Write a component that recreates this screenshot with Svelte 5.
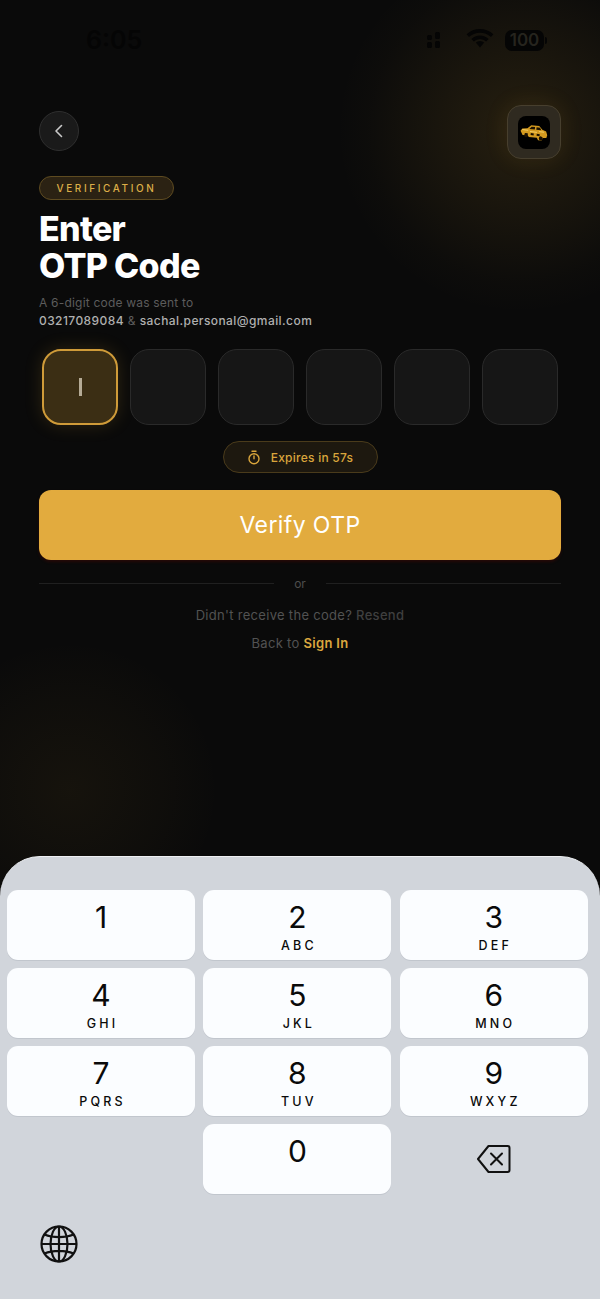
<script>
  const keys = [
    ['1', ''], ['2', 'ABC'], ['3', 'DEF'],
    ['4', 'GHI'], ['5', 'JKL'], ['6', 'MNO'],
    ['7', 'PQRS'], ['8', 'TUV'], ['9', 'WXYZ']
  ];
  const cells = [0, 1, 2, 3, 4, 5];
</script>

<div class="page">
  <div class="glow top"></div>
  <div class="glow bottom"></div>

  <main class="content">
    <div class="status">
      <span class="time">6:05</span>
      <div class="status-icons">
        <svg class="grid-ic" width="14" height="18" viewBox="0 0 14 18"><rect x="0" y="4" width="5" height="5" rx="1.5"/><rect x="8" y="1" width="5" height="7" rx="1.5"/><rect x="0" y="11" width="5" height="6" rx="1.5"/><rect x="8" y="10" width="5" height="7" rx="1.5"/></svg>
        <svg class="wifi" width="28" height="20" viewBox="0 0 28 20"><path d="M14 19.5 9.8 14.6a6 6 0 0 1 8.4 0Z"/><path d="M14 7.4c3.4 0 6.4 1.3 8.6 3.5l-2.4 2.7A8.9 8.9 0 0 0 14 11a8.9 8.9 0 0 0-6.2 2.6l-2.4-2.7A12.2 12.2 0 0 1 14 7.4Z"/><path d="M14 1c5.2 0 9.9 2 13.4 5.3l-2.4 2.7A16.2 16.2 0 0 0 14 4.7C9.800 4.700 5.900 6.300 3 9L.6 6.300A19.400 19.400 0 0 1 14 1Z"/></svg>
        <div class="battery"><span>100</span></div>
        <i class="nub"></i>
      </div>
    </div>

    <header class="top-row">
      <button class="back" aria-label="Back">
        <svg width="12" height="16" viewBox="0 0 12 16" fill="none" stroke="#c9c9c9" stroke-width="1.600" stroke-linecap="round" stroke-linejoin="round"><path d="M8.500 2.500 3 8l5.500 5.500"/></svg>
      </button>
      <div class="logo-box">
        <div class="logo">
          <svg class="car" width="30" height="18" viewBox="0 0 30 18">
            <path d="M1.500 9.500 3 7l5-1 3.500-3.300 8-.3 3.500 3.300 4 1.300 1.500 3.500-.5 3-3.500 .5-1 2.500-3.500.3-1.500-2.500-8 .2-1.500-1.500-5 .3Z" fill="#d39a1f"/>
            <path d="M12 4h3.500v2.500H10Zm5 0h3.500l1.500 2.500h-5ZM6 11h3v2H6Zm6-.5h3v2h-3Zm6 0h3v2h-3Z" fill="#1a1000"/>
            <circle cx="7.500" cy="13.500" r="1.800" fill="#1a1000"/><circle cx="22.500" cy="14.500" r="2" fill="#1a1000"/>
            <path d="M3 8h6M20 8h5M11 9h7" stroke="#f3d06a" stroke-width=".9"/>
          </svg>
        </div>
      </div>
    </header>

    <span class="badge">VERIFICATION</span>

    <h1>Enter<br />OTP Code</h1>

    <p class="sub">A 6-digit code was sent to</p>
    <p class="dest"><b>03217089084</b> <span>&amp;</span> <b>sachal.personal@gmail.com</b></p>

    <div class="otp">
      {#each cells as c}
        <div class="cell" class:active={c === 0}>
          {#if c === 0}<i class="caret"></i>{/if}
        </div>
      {/each}
    </div>

    <div class="timer-row">
      <div class="timer">
        <svg width="14" height="15" viewBox="0 0 14 15" fill="none" stroke="#d9a53c" stroke-width="1.400" stroke-linecap="round"><circle cx="7" cy="8.700" r="5"/><path d="M5 1.200h4M7 6v2.800"/></svg>
        <span>Expires in 57s</span>
      </div>
    </div>

    <button class="verify">Verify OTP</button>

    <div class="divider"><i></i><span>or</span><i></i></div>

    <p class="resend">Didn't receive the code? <span>Resend</span></p>
    <p class="signin">Back to <a href="#top">Sign In</a></p>
  </main>

  <section class="keyboard">
    <div class="keys">
      {#each keys as [d, l]}
        <div class="key">
          <span class="digit">{d}</span>
          {#if l}<span class="letters">{l}</span>{/if}
        </div>
      {/each}
      <div class="empty"></div>
      <div class="key"><span class="digit">0</span></div>
      <div class="empty del">
        <svg width="36" height="30" viewBox="0 0 36 30" fill="none" stroke="#111" stroke-width="2" stroke-linecap="round" stroke-linejoin="round">
          <path d="M12.500 2h19A2 2 0 0 1 33.500 4v22a2 2 0 0 1-2 2h-19L2 15Z" />
          <path d="M15 9.500 26 20.500M26 9.500 15 20.500" />
        </svg>
      </div>
    </div>
    <div class="globe">
      <svg width="38" height="38" viewBox="0 0 38 38" fill="none" stroke="#111" stroke-width="2.200">
        <circle cx="19" cy="19" r="17.500"/>
        <ellipse cx="19" cy="19" rx="8.500" ry="17.500"/>
        <path d="M19 1.500v35M1.500 19h35M4.500 9.500c8 3.500 21 3.500 29 0M4.500 28.500c8-3.500 21-3.500 29 0"/>
      </svg>
    </div>
  </section>
</div>

<style>
  :global(body) {
    margin: 0;
    background: #0a0a0a;
  }
  .page {
    position: relative;
    width: 600px;
    height: 1299px;
    overflow: hidden;
    background: #0a0a0a;
    display: flex;
    flex-direction: column;
    font-family: "Inter", "Liberation Sans", sans-serif;
  }
  .glow {
    position: absolute;
    border-radius: 50%;
    pointer-events: none;
  }
  .glow.top {
    left: 340px;
    top: -50px;
    width: 360px;
    height: 360px;
    background: radial-gradient(circle, rgba(212, 160, 50, 0.14) 0%, rgba(212, 160, 50, 0.06) 40%, rgba(212, 160, 50, 0.015) 60%, rgba(212, 160, 50, 0) 72%);
  }
  .glow.bottom {
    left: -80px;
    top: 640px;
    width: 300px;
    height: 300px;
    background: radial-gradient(circle, rgba(212, 160, 50, 0.06) 0%, rgba(212, 160, 50, 0.025) 45%, rgba(212, 160, 50, 0) 70%);
  }
  .content {
    position: relative;
    height: 856px;
    box-sizing: border-box;
    padding: 0 39px;
    display: flex;
    flex-direction: column;
    align-items: flex-start;
  }
  .status {
    align-self: stretch;
    height: 80px;
    flex: none;
    display: flex;
    align-items: flex-start;
    justify-content: space-between;
    padding: 25px 14px 0 47px;
    box-sizing: border-box;
    margin-bottom: 25px;
  }
  .time {
    font-size: 25px;
    font-weight: 600;
    line-height: 30px;
    color: #050505;
  }
  .status-icons {
    display: flex;
    align-items: center;
    height: 30px;
  }
  .grid-ic { fill: #050505; margin-right: 25px; }
  .wifi { fill: #050505; margin-right: 11px; margin-bottom: 5px; }
  .battery {
    width: 39px;
    height: 21px;
    border-radius: 7px;
    background: #050505;
    display: flex;
    align-items: center;
    justify-content: center;
  }
  .battery span {
    font-size: 17px;
    font-weight: 600;
    color: #26241e;
  }
  .nub {
    width: 2px;
    height: 7px;
    margin-left: 1px;
    border-radius: 0 2px 2px 0;
    background: #050505;
  }
  .top-row {
    align-self: stretch;
    display: flex;
    justify-content: space-between;
    align-items: center;
    height: 54px;
    flex: none;
  }
  .back {
    width: 40px;
    height: 40px;
    margin: 0 0 2px;
    padding: 0;
    border-radius: 50%;
    border: 1px solid #2f2f2f;
    background: #1a1a1a;
    display: flex;
    align-items: center;
    justify-content: center;
  }
  .logo-box {
    width: 54px;
    height: 54px;
    box-sizing: border-box;
    border-radius: 14px;
    background: #2f2a20;
    border: 1px solid #473f2e;
    display: flex;
    align-items: center;
    justify-content: center;
    box-shadow: 0 0 24px rgba(212, 160, 50, 0.1);
  }
  .logo {
    width: 32px;
    height: 33px;
    border-radius: 8px;
    background: #000;
    display: flex;
    align-items: center;
    justify-content: center;
  }
  .car {
    transform: rotate(7deg);
  }
  .badge {
    margin-top: 17px;
    height: 24px;
    width: 135px;
    box-sizing: border-box;
    border-radius: 12px;
    border: 1px solid #5e4b20;
    background: #2b2213;
    color: #dcae48;
    font-size: 10px;
    font-weight: 500;
    letter-spacing: 2.600px;
    display: flex;
    align-items: center;
    justify-content: center;
  }
  h1 {
    margin: 10px 0 0;
    font-size: 34px;
    line-height: 37px;
    font-weight: 800;
    letter-spacing: -0.700px;
    color: #fff;
  }
  .sub {
    margin: 10px 0 0;
    font-size: 12px;
    line-height: 17px;
    color: #5c5c5c;
    letter-spacing: 0.200px;
  }
  .dest {
    margin: 1px 0 0;
    font-size: 12px;
    line-height: 18px;
    color: #5c5c5c;
    letter-spacing: 0.420px;
  }
  .dest b {
    font-weight: 500;
    color: #b0b0b0;
  }
  .otp {
    align-self: stretch;
    margin: 19px 3px 0;
    display: flex;
    gap: 12px;
    width: 516px;
  }
  .cell {
    width: 76px;
    height: 76px;
    flex: none;
    box-sizing: border-box;
    border-radius: 19px;
    background: #161616;
    border: 1px solid #2a2a2a;
    display: flex;
    align-items: center;
    justify-content: center;
  }
  .cell.active {
    background: #3b2e14;
    border: 2px solid #cf9b39;
    box-shadow: 0 0 18px rgba(212, 160, 50, 0.18);
  }
  .caret {
    width: 3px;
    height: 18px;
    background: #b5ab96;
  }
  .timer-row {
    align-self: stretch;
    display: flex;
    justify-content: center;
    margin-top: 16px;
  }
  .timer {
    width: 155px;
    height: 32px;
    box-sizing: border-box;
    border-radius: 16px;
    border: 1px solid #4a3b1b;
    background: #1d180f;
    display: flex;
    align-items: center;
    justify-content: center;
    gap: 10px;
    color: #d9a53c;
    font-size: 12px;
    font-weight: 500;
    letter-spacing: 0.250px;
  }
  .verify {
    align-self: stretch;
    margin-top: 17px;
    height: 70px;
    flex: none;
    border: none;
    border-radius: 12px;
    background: #e2ab3e;
    color: #fff;
    font-family: inherit;
    font-size: 23px;
    font-weight: 400;
    letter-spacing: 0.400px;
    box-shadow: 0 2px 3px rgba(90, 10, 0, 0.35);
  }
  .divider {
    align-self: stretch;
    display: flex;
    align-items: center;
    gap: 20px;
    margin-top: 14px;
    height: 18px;
  }
  .divider i {
    flex: 1;
    height: 1px;
    background: #202020;
  }
  .divider span {
    font-size: 12px;
    color: #4d4d4d;
    width: 12px;
    text-align: center;
  }
  .resend, .signin {
    align-self: stretch;
    text-align: center;
    font-size: 13px;
    line-height: 18px;
    letter-spacing: 0.300px;
    color: #525252;
  }
  .resend {
    margin: 14px 0 0;
  }
  .resend span {
    color: #3f3f3f;
    font-weight: 500;
  }
  .signin {
    margin: 10px 0 0;
  }
  .signin a {
    color: #dca83f;
    font-weight: 600;
    text-decoration: none;
  }
  .keyboard {
    position: relative;
    flex: 1;
    background: #d1d5db;
    border-radius: 40px 40px 0 0;
    border-top: 1px solid #eef0f3;
    box-sizing: border-box;
    padding: 33px 12px 0 7px;
    display: flex;
    flex-direction: column;
  }
  .keys {
    display: grid;
    grid-template-columns: 188px 188px 188px;
    column-gap: 8.400px;
    grid-auto-rows: 69.500px;
    row-gap: 8.500px;
  }
  .key {
    background: #fbfdff;
    border-radius: 11px;
    display: flex;
    flex-direction: column;
    align-items: center;
    color: #0a0a0a;
    box-shadow: 0 1px 0 rgba(170, 175, 185, 0.4);
  }
  .digit {
    margin-top: 8px;
    font-size: 30px;
    line-height: 38px;
    font-weight: 400;
  }
  .letters {
    font-size: 12.500px;
    line-height: 14px;
    font-weight: 500;
    letter-spacing: 3.200px;
    margin-right: -3px;
    margin-top: 3px;
  }
  .del {
    display: flex;
    align-items: center;
    justify-content: center;
  }
  .globe {
    margin: 31px 0 0 33px;
    width: 38px;
    height: 38px;
  }
</style>
